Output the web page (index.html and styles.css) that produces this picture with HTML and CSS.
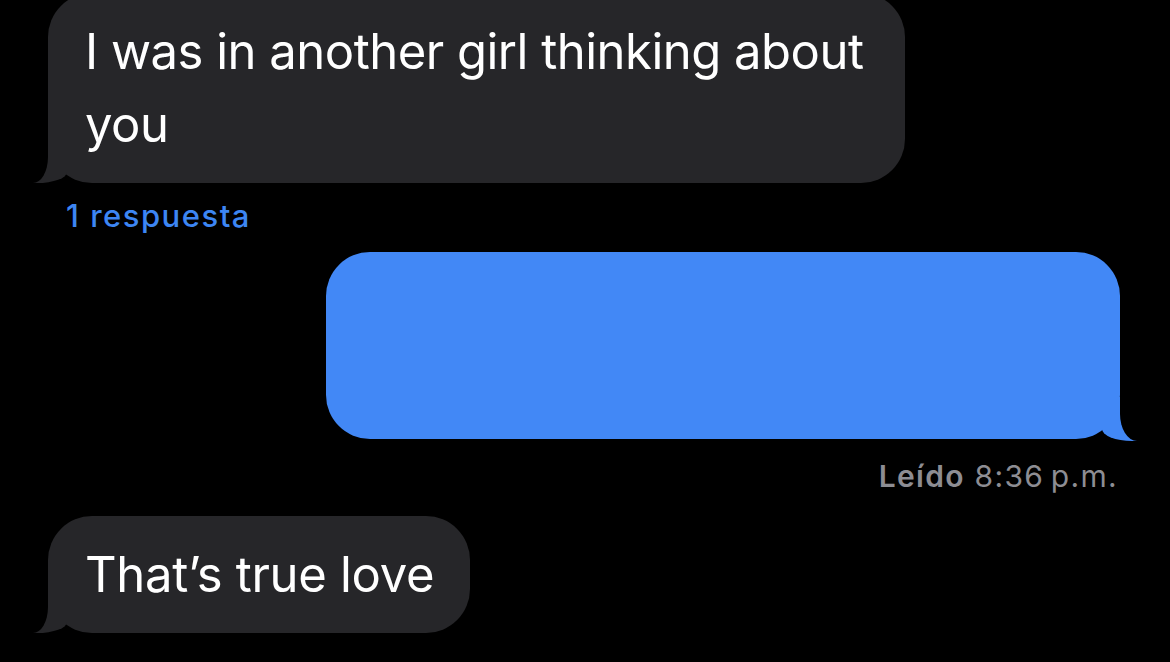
FILE: index.html
```html
<!DOCTYPE html>
<html>
<head>
    <title>Mensajes</title>
<link rel="stylesheet" href="styles.css">
</head>
<body>

<div class="thread">

  <div class="bubble them wide">I was in another girl thinking about you</div>
  <div class="replies">1 respuesta</div>

  <div class="bubble me"></div>
  <div class="receipt"><b>Leído</b> 8:36&thinsp;p.m.</div>

  <div class="bubble them">That’s true love</div>

</div>

</body>
</html>
```

FILE: styles.css
```css
body {
  margin: 0;
  background-color: #000;
  font-family: Inter, "Noto Sans", sans-serif;
  overflow: hidden;
}

.thread {
  display: flex;
  flex-direction: column;
  padding: 0 50px 0 48px;
}

/* message bubbles */

.bubble {
  position: relative;
  border-radius: 44px;
  font-size: 49px;
  line-height: 73px;
  letter-spacing: -0.3px;
  padding: 22px 36px 22px 37px;
  color: #fff;
}

.them {
  align-self: flex-start;
  background-color: #262629;
}

.wide {
  width: 857px;
  box-sizing: border-box;
  padding-right: 28px;
  margin-top: -7px;
  letter-spacing: -0.5px;
}

.me {
  align-self: flex-end;
  width: 794px;
  height: 187px;
  box-sizing: border-box;
  margin-top: 18px;
  background-color: #4288f6;
}

.receipt + .them {
  margin-top: 23px;
}

/* tails */

.bubble::before,
.bubble::after {
  content: "";
  position: absolute;
  bottom: 0;
  height: 44px;
}

.them::before {
  left: -15px;
  width: 34px;
  background-color: #262629;
  border-bottom-right-radius: 30px 11px;
}

.them::after {
  left: -40px;
  width: 40px;
  background-color: #000;
  border-bottom-right-radius: 15px 26px;
}

.me::before {
  right: -17px;
  bottom: -2px;
  width: 35px;
  background-color: #4288f6;
  border-bottom-left-radius: 30px 12px;
}

.me::after {
  right: -42px;
  bottom: -2px;
  width: 42px;
  background-color: #000;
  border-bottom-left-radius: 17px 27px;
}

/* small labels */

.replies {
  margin: 15px 0 0 18px;
  font-size: 31px;
  line-height: 36px;
  font-weight: 500;
  letter-spacing: 1.5px;
  color: #3d86f3;
}

.receipt {
  align-self: flex-end;
  margin: 20px 2px 0 0;
  font-size: 30px;
  line-height: 34px;
  letter-spacing: 1.3px;
  color: #8d8d93;
}

.receipt b {
  font-weight: 600;
}
```
